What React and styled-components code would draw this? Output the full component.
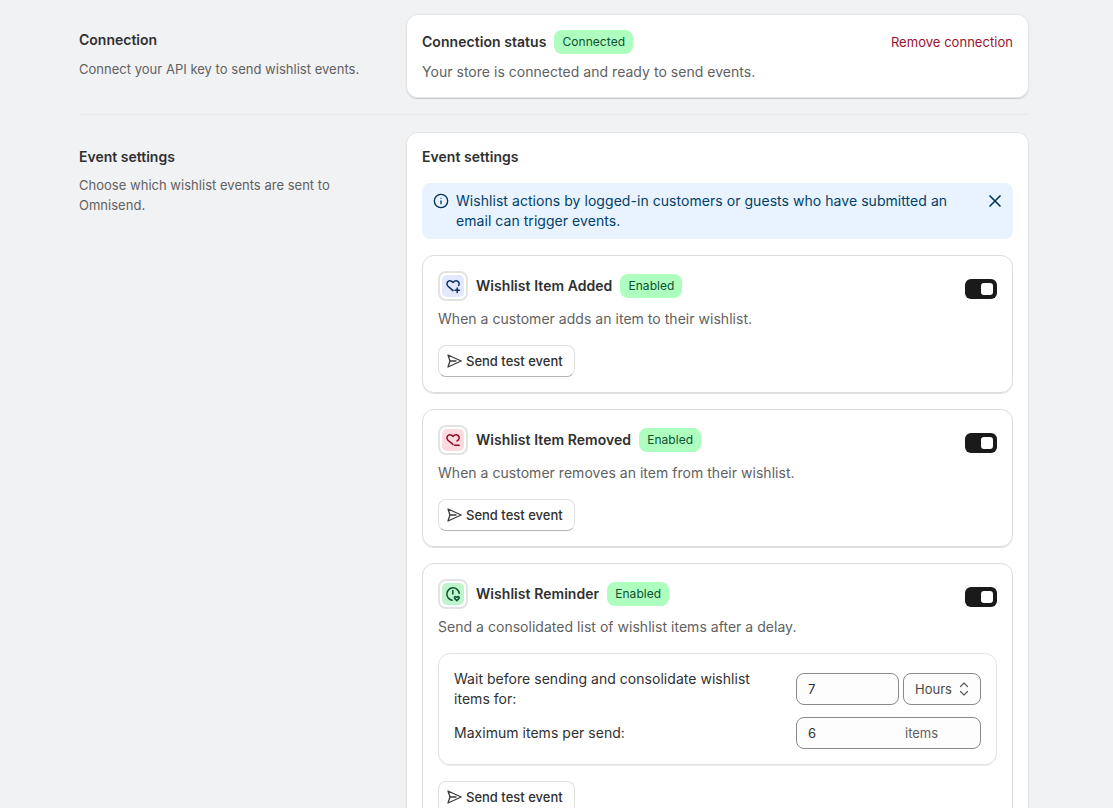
import styled, { createGlobalStyle } from "styled-components";
import { Info, X } from "lucide-react";

const GlobalStyle = createGlobalStyle`
  * {
    box-sizing: border-box;
  }

  html, body {
    margin: 0;
    height: 808px;
    overflow: hidden;
    background: #f1f2f4;
    font-family: Inter, "Liberation Sans", sans-serif;
    font-size: 14px;
    line-height: 20px;
    color: #303030;
  }
`;

const Page = styled.div`
  width: 950px;
  margin-left: 79px;
`;

const Section = styled.section`
  display: grid;
  grid-template-columns: 311px 623px;
  column-gap: 16px;
  padding: ${(props) => (props.$first ? "14px 0 16px" : "17px 0 0")};
  border-bottom: ${(props) => (props.$first ? "1px solid #e8e9eb" : "none")};
`;

const Annotation = styled.div`
  display: flex;
  flex-direction: column;
  gap: ${(props) => (props.$first ? "9px" : "8px")};
  padding-top: ${(props) => (props.$first ? "16px" : "15px")};
`;

const SideTitle = styled.h2`
  margin: 0;
  font-size: 14px;
  line-height: 20px;
  font-weight: 600;
  color: #303030;
`;

const SideText = styled.p`
  margin: 0;
  font-size: 13px;
  line-height: 20px;
  letter-spacing: 0.02px;
  color: #616161;
`;

const Card = styled.div`
  background: #fff;
  border-radius: 12px;
  padding: 16px;
  box-shadow: inset 0 0 0 1px #e4e4e4, 0 1px 1px 0 rgba(0, 0, 0, 0.18);
`;

const StatusRow = styled.div`
  display: flex;
  align-items: center;
  justify-content: space-between;
  margin-bottom: 8px;
`;

const TitleGroup = styled.div`
  display: flex;
  align-items: center;
  gap: 8px;
`;

const CardTitle = styled.h3`
  margin: 0;
  font-size: 14px;
  line-height: 24px;
  font-weight: 600;
  letter-spacing: 0.05px;
  color: #303030;
`;

const PanelHeading = styled(CardTitle)`
  line-height: 18px;
`;

const Badge = styled.span`
  display: inline-flex;
  align-items: center;
  height: 24px;
  padding: 0 8px;
  border-radius: 8px;
  background: #aefebf;
  color: #0c5132;
  font-size: 12px;
  font-weight: 400;
  letter-spacing: 0.06px;
`;

const DangerLink = styled.a`
  color: #9a1230;
  font-size: 13px;
  line-height: 20px;
  letter-spacing: 0.04px;
`;

const Muted = styled.p`
  margin: 0;
  font-size: 14px;
  line-height: 20px;
  letter-spacing: 0.03px;
  color: #616161;
`;

const Banner = styled.div`
  display: flex;
  align-items: flex-start;
  margin: 17px 0 16px;
  padding: 8px 8px 8px 11px;
  border-radius: 8px;
  background: #e8f3ff;
  color: #00416a;
  font-size: 14px;
  line-height: 20px;
  letter-spacing: 0.05px;
`;

const BannerIcon = styled.span`
  flex: none;
  display: flex;
  margin-right: 7px;
  padding-top: 2px;
  color: #00345c;
`;

const BannerClose = styled.span`
  flex: none;
  display: flex;
  color: #00345c;
`;

const BannerText = styled.div`
  flex: 1;
  padding-right: 9px;
`;

const EventList = styled.div`
  display: flex;
  flex-direction: column;
  gap: 16px;
`;

const EventCard = styled.div`
  border: 1px solid #dcdcdc;
  border-radius: 12px;
  padding: 15px;
  box-shadow: 0 1px 0 0 rgba(0, 0, 0, 0.12);
`;

const EventHead = styled.div`
  display: flex;
  justify-content: space-between;
  align-items: flex-start;
`;

const EventIconFrame = styled.span`
  width: 30px;
  height: 30px;
  display: flex;
  align-items: center;
  justify-content: center;
  border: 2px solid #e3e3e3;
  border-radius: 8px;
  background: #fff;
`;

const EventIconTile = styled.span`
  width: 22px;
  height: 22px;
  display: flex;
  align-items: center;
  justify-content: center;
  border-radius: 5px;
  background: ${(props) => props.$bg};
  color: ${(props) => props.$fg};
`;

const Toggle = styled.span`
  margin-top: 8px;
  width: 32px;
  height: 20px;
  display: flex;
  align-items: center;
  justify-content: flex-end;
  padding-right: 4px;
  border-radius: 6px;
  background: #1a1a1a;

  &::after {
    content: "";
    width: 12px;
    height: 12px;
    border-radius: 3px;
    background: #fff;
  }
`;

const EventDesc = styled(Muted)`
  margin-top: 8px;
`;

const SendButton = styled.button`
  margin-top: 16px;
  display: flex;
  align-items: center;
  gap: 3px;
  height: 32px;
  padding: 0 11px 0 8px;
  border: 1px solid #e0e0e0;
  border-bottom-color: #b5b5b5;
  border-radius: 8px;
  background: #fff;
  color: #303030;
  font-family: inherit;
  font-size: 13px;
  font-weight: 500;
  line-height: 20px;
`;

const Panel = styled.div`
  margin-top: 16px;
  display: flex;
  flex-direction: column;
  gap: 8px;
  padding: 15px;
  border: 1px solid #e3e3e3;
  border-radius: 12px;
  box-shadow: 0 1px 0 0 rgba(0, 0, 0, 0.08);
`;

const PanelRow = styled.div`
  display: grid;
  grid-template-columns: 1fr 185px;
  column-gap: 16px;
  align-items: center;
`;

const PanelLabel = styled.div`
  font-size: 14px;
  line-height: 20px;
  letter-spacing: 0.03px;
  color: #303030;
`;

const Controls = styled.div`
  display: flex;
  gap: 4px;
`;

const FieldBox = styled.div`
  height: 32px;
  display: flex;
  align-items: center;
  justify-content: space-between;
  border: 1px solid #8a8a8a;
  border-radius: 8px;
  background: #fdfdfd;
  font-size: 13px;
  color: #303030;
`;

const NumberField = styled(FieldBox)`
  flex: 1;
  padding: 0 11px;
`;

const SelectField = styled(FieldBox)`
  width: 78px;
  flex: none;
  padding: 0 10px 0 11px;
  color: #4a4a4a;
`;

const Suffix = styled.span`
  width: 64px;
  color: #616161;
`;

function HeartPlus() {
  return (
    <svg width="16" height="16" viewBox="0 0 16 16" fill="none" stroke="currentColor" strokeWidth="1.5" strokeLinecap="round" strokeLinejoin="round">
      <path d="M8 12.6 3 8.2C1.2 6.4 1.8 3.4 4 2.9c1.6-.3 3 .4 4 1.6 1-1.2 2.4-1.9 4-1.6 2 .4 2.7 2.8 1.7 4.6" />
      <path d="M12.2 10v4.4M10 12.2h4.4" />
    </svg>
  );
}

function HeartMinus() {
  return (
    <svg width="16" height="16" viewBox="0 0 16 16" fill="none" stroke="currentColor" strokeWidth="1.5" strokeLinecap="round" strokeLinejoin="round">
      <path d="M8 12.4 3 8.2C1.2 6.4 1.8 3.4 4 2.9c1.6-.3 3 .4 4 1.6 1-1.2 2.4-1.9 4-1.6 2.1.4 2.8 2.9 1.6 4.7L12 9" />
      <path d="M9.6 13.2h4.6" />
    </svg>
  );
}

function ClockHeart() {
  return (
    <svg width="16" height="16" viewBox="0 0 16 16" fill="none" stroke="currentColor" strokeWidth="1.5" strokeLinecap="round" strokeLinejoin="round">
      <path d="M7.2 14.2A6.2 6.2 0 1 1 14.2 7.4" />
      <path d="M7.8 4.6V8" />
      <path d="M11.8 14.6 9.6 12.4c-.8-1 .4-2.3 1.5-1.6l.7.5.7-.5c1.1-.7 2.3.6 1.5 1.6z" />
    </svg>
  );
}

function SendIcon() {
  return (
    <svg width="16" height="16" viewBox="0 0 16 16" fill="none" stroke="#3d3d3d" strokeWidth="1.3" strokeLinejoin="round" strokeLinecap="round">
      <path d="M1 2 14.2 8 1 14 3 8z" />
      <path d="M3 8h6" />
    </svg>
  );
}

function SelectChevrons() {
  return (
    <svg width="12" height="16" viewBox="0 0 12 16" fill="none" stroke="#5c5c5c" strokeWidth="1.2" strokeLinecap="round" strokeLinejoin="round">
      <path d="M2.5 5.5 6 2l3.5 3.5" />
      <path d="M2.5 10.5 6 14l3.5-3.5" />
    </svg>
  );
}

const events = [
  {
    id: "added",
    name: "Wishlist Item Added",
    desc: "When a customer adds an item to their wishlist.",
    bg: "#e2e8fd",
    fg: "#0a2f5c",
    Icon: HeartPlus,
  },
  {
    id: "removed",
    name: "Wishlist Item Removed",
    desc: "When a customer removes an item from their wishlist.",
    bg: "#fed9df",
    fg: "#8e0b21",
    Icon: HeartMinus,
  },
  {
    id: "reminder",
    name: "Wishlist Reminder",
    desc: "Send a consolidated list of wishlist items after a delay.",
    bg: "#bff5cc",
    fg: "#0c5132",
    Icon: ClockHeart,
    settings: true,
  },
];

function EventItem({ event }) {
  const { name, desc, bg, fg, Icon, settings } = event;

  return (
    <EventCard>
      <EventHead>
        <TitleGroup>
          <EventIconFrame>
            <EventIconTile $bg={bg} $fg={fg}>
              <Icon />
            </EventIconTile>
          </EventIconFrame>
          <CardTitle>{name}</CardTitle>
          <Badge>Enabled</Badge>
        </TitleGroup>
        <Toggle />
      </EventHead>
      <EventDesc>{desc}</EventDesc>
      {settings && (
        <Panel>
          <PanelRow>
            <PanelLabel>Wait before sending and consolidate wishlist items for:</PanelLabel>
            <Controls>
              <NumberField>7</NumberField>
              <SelectField>
                Hours
                <SelectChevrons />
              </SelectField>
            </Controls>
          </PanelRow>
          <PanelRow>
            <PanelLabel>Maximum items per send:</PanelLabel>
            <NumberField>
              6<Suffix>items</Suffix>
            </NumberField>
          </PanelRow>
        </Panel>
      )}
      <SendButton>
        <SendIcon />
        Send test event
      </SendButton>
    </EventCard>
  );
}

export default function App() {
  return (
    <Page>
      <GlobalStyle />
      <Section $first>
        <Annotation $first>
          <SideTitle>Connection</SideTitle>
          <SideText>Connect your API key to send wishlist events.</SideText>
        </Annotation>
        <Card>
          <StatusRow>
            <TitleGroup>
              <CardTitle>Connection status</CardTitle>
              <Badge>Connected</Badge>
            </TitleGroup>
            <DangerLink>Remove connection</DangerLink>
          </StatusRow>
          <Muted>Your store is connected and ready to send events.</Muted>
        </Card>
      </Section>
      <Section>
        <Annotation>
          <SideTitle>Event settings</SideTitle>
          <SideText>Choose which wishlist events are sent to Omnisend.</SideText>
        </Annotation>
        <Card>
          <PanelHeading>Event settings</PanelHeading>
          <Banner>
            <BannerIcon>
              <Info size={16} strokeWidth={2} />
            </BannerIcon>
            <BannerText>
              Wishlist actions by logged-in customers or guests who have submitted an email can trigger events.
            </BannerText>
            <BannerClose>
              <X size={20} strokeWidth={2} />
            </BannerClose>
          </Banner>
          <EventList>
            {events.map((event) => (
              <EventItem key={event.id} event={event} />
            ))}
          </EventList>
        </Card>
      </Section>
    </Page>
  );
}
